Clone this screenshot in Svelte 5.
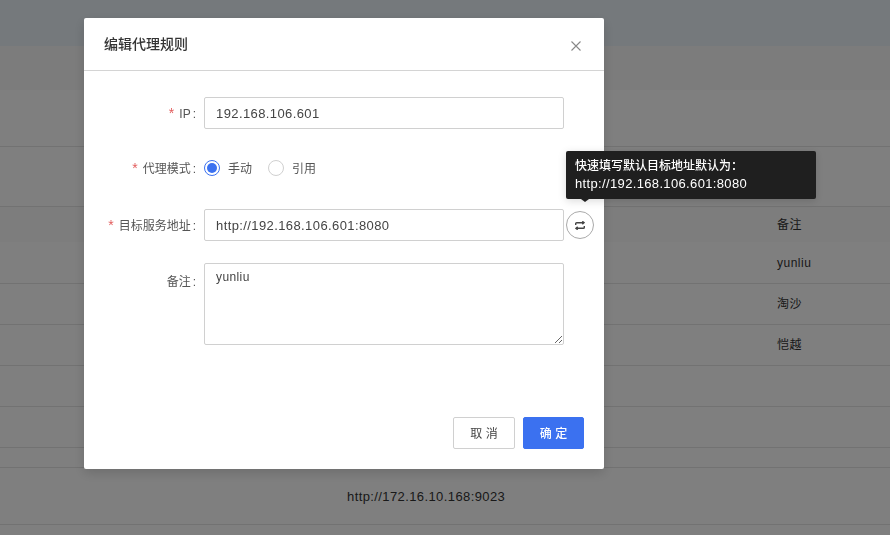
<script lang="ts">
  let mode = $state('manual');
  let ip = $state('192.168.106.601');
  let target = $state('http://192.168.106.601:8080');
  let remark = $state('yunliu');

  const rows = [
    { h: 46, cls: 'topbar' },
    { h: 44, cls: 'band' },
    { h: 57, cls: 'line' },
    { h: 60, cls: 'line' },
    { h: 35, cls: 'head', note: '备注', cn: true },
    { h: 42, cls: 'line', note: 'yunliu' },
    { h: 41, cls: 'line', note: '淘沙', cn: true },
    { h: 41, cls: 'line', note: '恺越', cn: true },
    { h: 41, cls: 'line' },
    { h: 41, cls: 'line' },
    { h: 20, cls: 'line' },
    { h: 57, cls: 'line', url: 'http://172.16.10.168:9023' },
    { h: 11, cls: '' },
  ];
</script>

<div class="page">
  {#each rows as row}
    <div class="row {row.cls}" style="height: {row.h}px">
      {#if row.url}<span class="url">{row.url}</span>{/if}
      {#if row.note}<span class="note" class:cn={row.cn}>{row.note}</span>{/if}
    </div>
  {/each}
</div>

<div class="mask"></div>

<div class="modal">
  <div class="modal-header">
    <span class="modal-title">编辑代理规则</span>
    <button class="close" aria-label="关闭">
      <svg width="10" height="10" viewBox="0 0 10 10">
        <path d="M.5.5l9 9M9.5.5l-9 9" stroke="#888" stroke-width="1.1" fill="none" />
      </svg>
    </button>
  </div>

  <div class="modal-body">
    <div class="item ip-item">
      <div class="label"><i>*</i>IP<b>:</b></div>
      <input class="input" bind:value={ip} />
    </div>

    <div class="item mode-item">
      <div class="label"><i>*</i>代理模式<b>:</b></div>
      <label class="radio">
        <input type="radio" bind:group={mode} value="manual" />
        <span class="dot"></span>
        <span class="radio-text">手动</span>
      </label>
      <label class="radio">
        <input type="radio" bind:group={mode} value="ref" />
        <span class="dot"></span>
        <span class="radio-text">引用</span>
      </label>
    </div>

    <div class="item target-item">
      <div class="label"><i>*</i>目标服务地址<b>:</b></div>
      <input class="input" bind:value={target} />
      <button class="fill" aria-label="快速填写">
        <svg width="10" height="9" viewBox="0 0 10 9" fill="none" stroke="#444" stroke-width="1.4">
          <path d="M.7 4V2.6C.7 2 1.1 1.7 1.7 1.7H9M7.3.3L9 1.7 7.3 3.1" />
          <path d="M9.3 5v1.4c0 .6-.4.9-1 .9H1M2.7 8.7L1 7.3l1.7-1.4" />
        </svg>
      </button>
      <div class="tooltip">
        <span class="tip-cn">快速填写默认目标地址默认为：</span><br />http://192.168.106.601:8080
      </div>
    </div>

    <div class="item remark-item">
      <div class="label">备注<b>:</b></div>
      <textarea class="input area" bind:value={remark}></textarea>
    </div>
  </div>

  <div class="modal-footer">
    <button class="btn">取 消</button>
    <button class="btn primary">确 定</button>
  </div>
</div>

<style>
  :global(body) {
    margin: 0;
    overflow: hidden;
    background: #fff;
    font-family: "Liberation Sans", "Noto Sans CJK SC", sans-serif;
  }

  .page {
    height: 535px;
    overflow: hidden;
    background: #fff;
    color: #333;
    font-size: 13px;
  }

  .row {
    display: flex;
    align-items: center;
    box-sizing: border-box;
  }
  .topbar {
    background: #ebf3f8;
  }
  .band {
    background: #f9f9f9;
  }
  .line {
    border-bottom: 1px solid #e4e4e4;
  }
  .head {
    background: #fafafa;
  }
  .url {
    margin-left: 347px;
    letter-spacing: 0.4px;
  }
  .note {
    margin-left: 777px;
    font-size: 12px;
    letter-spacing: 0.5px;
  }
  .note.cn {
    padding-bottom: 3px;
  }

  .mask {
    position: fixed;
    inset: 0;
    background: rgba(0, 0, 0, 0.5);
  }

  .modal {
    position: fixed;
    left: 84px;
    top: 18px;
    width: 520px;
    height: 451px;
    background: #fff;
    border-radius: 2px;
    box-shadow: 0 4px 12px rgba(0, 0, 0, 0.15);
    display: flex;
    flex-direction: column;
    color: #555;
    font-size: 13px;
  }

  .modal-header {
    height: 53px;
    box-sizing: border-box;
    border-bottom: 1px solid #d4d4d4;
    display: flex;
    align-items: center;
    justify-content: space-between;
    padding: 0 23px 3px 20px;
  }
  .modal-title {
    font-size: 14px;
    font-weight: 500;
    color: #333;
  }
  .close {
    border: none;
    background: none;
    padding: 0;
    display: flex;
    margin-top: 7px;
  }

  .modal-body {
    flex: 1;
    padding-top: 26px;
  }
  .item {
    position: relative;
    display: flex;
    align-items: flex-start;
    margin-bottom: 22px;
  }
  .ip-item {
    margin-bottom: 23px;
  }
  .mode-item {
    margin-bottom: 25px;
    align-items: center;
    height: 32px;
  }
  .label {
    width: 120px;
    height: 32px;
    line-height: 32px;
    text-align: right;
    font-size: 12px;
    color: #555;
  }
  .remark-item .label {
    line-height: 38px;
  }
  .label i {
    font-style: normal;
    font-size: 14px;
    color: #e25c5c;
    margin-right: 5px;
  }
  .label b {
    font-weight: normal;
    margin: 0 8px 0 2px;
  }

  .input {
    box-sizing: border-box;
    width: 360px;
    height: 32px;
    border: 1px solid #d0d0d0;
    border-radius: 2px;
    padding: 0 11px;
    font: inherit;
    letter-spacing: 0.4px;
    color: #444;
    outline: none;
  }
  .area {
    height: 82px;
    padding: 3px 11px;
    line-height: 20px;
    resize: vertical;
    font-size: 12px;
    display: block;
  }

  .radio {
    display: flex;
    align-items: center;
    margin-right: 16px;
    font-size: 12px;
    line-height: 14px;
    color: #555;
  }
  .radio input {
    display: none;
  }
  .radio-text {
    margin-top: 2px;
  }
  .dot {
    box-sizing: border-box;
    width: 16px;
    height: 16px;
    border-radius: 50%;
    border: 1px solid #d0d0d0;
    margin-right: 8px;
    position: relative;
  }
  .radio input:checked + .dot {
    border-color: #3b71f0;
  }
  .radio input:checked + .dot::after {
    content: "";
    position: absolute;
    inset: 2px;
    border-radius: 50%;
    background: #3b71f0;
  }

  .fill {
    box-sizing: border-box;
    width: 28px;
    height: 28px;
    margin: 2px 0 0 2px;
    padding: 0;
    border: 1px solid #aaa;
    border-radius: 50%;
    background: #fff;
    display: flex;
    align-items: center;
    justify-content: center;
  }

  .tooltip {
    position: absolute;
    left: 482px;
    top: -58px;
    box-sizing: border-box;
    width: 250px;
    height: 48px;
    padding: 6px 9px;
    background: #1f1f1f;
    border-radius: 2px;
    box-shadow: 0 2px 8px rgba(0, 0, 0, 0.15);
    color: #fff;
    font-size: 13px;
    line-height: 18px;
    letter-spacing: 0.35px;
  }
  .tip-cn {
    font-size: 12px;
    font-weight: 500;
    letter-spacing: 0;
  }
  .tooltip::after {
    content: "";
    position: absolute;
    left: 15px;
    bottom: -3px;
    border: 4px solid transparent;
    border-bottom: 0;
    border-top: 3px solid #1f1f1f;
  }

  .modal-footer {
    display: flex;
    justify-content: flex-end;
    gap: 8px;
    padding: 0 20px 20px;
  }
  .btn {
    box-sizing: border-box;
    width: 62px;
    height: 32px;
    padding: 0 0 2px;
    border: 1px solid #d0d0d0;
    border-radius: 2px;
    background: #fff;
    color: #444;
    font: inherit;
    font-size: 12px;
  }
  .primary {
    width: 61px;
    border-color: #3b71f0;
    background: #3b71f0;
    color: #fff;
    font-weight: 500;
  }
</style>
